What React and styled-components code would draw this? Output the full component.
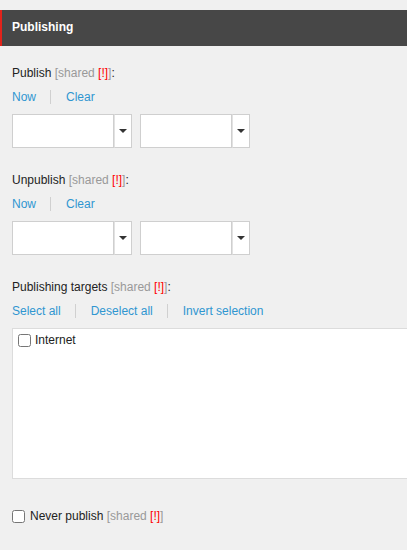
import React from "react";
import styled, { createGlobalStyle } from "styled-components";

const Global = createGlobalStyle`
  html, body { margin: 0; padding: 0; background: #f0f0f0; }
  body { font-family: "Liberation Sans", Arial, sans-serif; font-size: 12px; color: #222; overflow: hidden; }
`;

const Page = styled.div`
  padding-top: 10px;
  width: 407px;
  overflow: hidden;
`;

const Header = styled.div`
  height: 36px;
  box-sizing: border-box;
  background: #474747;
  border-left: 2px solid #e3231b;
  padding: 10px 10px 12px;
  color: #fff;
  font-weight: bold;
  font-size: 12px;
  line-height: 14px;
`;

const Body = styled.div`
  padding: 20px 0 0 12px;
  display: flex;
  flex-direction: column;
`;

const Section = styled.div`
  display: flex;
  flex-direction: column;
  gap: 10px;
  margin-bottom: ${(p) => p.$mb ?? 25}px;
`;

const Label = styled.div`
  line-height: 14px;
  color: #222;
`;

const Shared = styled.span`
  color: #999;
`;

const Bang = styled.span`
  color: #f00;
`;

const Links = styled.div`
  display: flex;
  line-height: 14px;
`;

const Link = styled.a`
  color: #2f96d0;
  text-decoration: none;
  padding: 0 14px 0 15px;
  border-left: 1px solid #d0d0d0;
  cursor: pointer;
  &:first-child {
    padding-left: 0;
    border-left: none;
  }
`;

const Pickers = styled.div`
  display: flex;
  gap: 8px;
`;

const Combo = styled.div`
  display: flex;
  height: 34px;
`;

const Field = styled.div`
  width: ${(p) => p.$w}px;
  box-sizing: border-box;
  background: #fff;
  border: 1px solid #cfcfcf;
`;

const DropButton = styled.div`
  width: 18px;
  box-sizing: border-box;
  background: #fff;
  border: 1px solid #cfcfcf;
  border-left: 1px solid #e2e2e2;
  display: flex;
  align-items: center;
  justify-content: center;
  &::after {
    content: "";
    width: 0;
    height: 0;
    border-left: 4px solid transparent;
    border-right: 4px solid transparent;
    border-top: 4px solid #333;
  }
`;

const ListBox = styled.div`
  height: 151px;
  box-sizing: border-box;
  background: #fff;
  border: 1px solid #dcdcdc;
  border-right: none;
  padding: 4px 5px;
`;

const CheckRow = styled.label`
  display: flex;
  align-items: center;
  gap: ${(p) => p.$gap ?? 4}px;
  line-height: 14px;
  color: #222;
`;

const Check = styled.input.attrs({ type: "checkbox" })`
  margin: 0;
  width: 13px;
  height: 13px;
`;

const Bottom = styled.div`
  margin-top: 30px;
`;

const SharedTag = () => (
  <Shared>
    [shared <Bang>[!]</Bang>]
  </Shared>
);

const Picker = () => (
  <Pickers>
    <Combo>
      <Field $w={102} />
      <DropButton />
    </Combo>
    <Combo>
      <Field $w={92} />
      <DropButton />
    </Combo>
  </Pickers>
);

export default function App() {
  return (
    <Page>
      <Global />
      <Header>Publishing</Header>
      <Body>
        <Section>
          <Label>
            Publish <SharedTag />:
          </Label>
          <Links>
            <Link>Now</Link>
            <Link>Clear</Link>
          </Links>
          <Picker />
        </Section>
        <Section>
          <Label>
            Unpublish <SharedTag />:
          </Label>
          <Links>
            <Link>Now</Link>
            <Link>Clear</Link>
          </Links>
          <Picker />
        </Section>
        <Section $mb={0}>
          <Label>
            Publishing targets <SharedTag />:
          </Label>
          <Links>
            <Link>Select all</Link>
            <Link>Deselect all</Link>
            <Link>Invert selection</Link>
          </Links>
          <ListBox>
            <CheckRow $gap={4}>
              <Check />
              Internet
            </CheckRow>
          </ListBox>
        </Section>
        <Bottom>
          <CheckRow $gap={5}>
            <Check />
            <span>
              Never publish <SharedTag />
            </span>
          </CheckRow>
        </Bottom>
      </Body>
    </Page>
  );
}
